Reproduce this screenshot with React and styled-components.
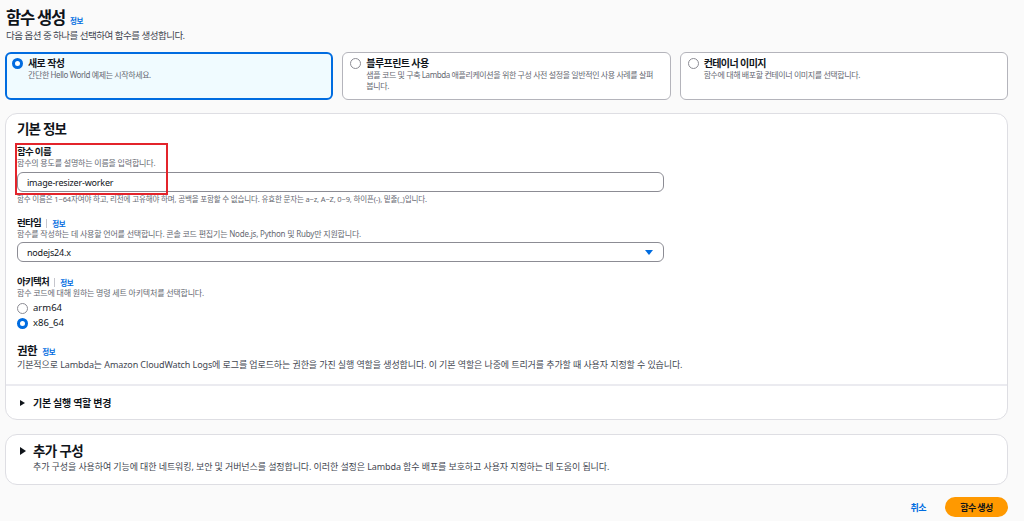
import React from "react";
import styled, { createGlobalStyle } from "styled-components";

const Global = createGlobalStyle`
  html, body { margin: 0; padding: 0; background: #fafafa; }
  body { font-family: "Noto Sans", "Noto Sans CJK KR", sans-serif; color: #0f141a; }
  * { box-sizing: border-box; }
`;

const Page = styled.div`
  width: 1024px;
  height: 521px;
  padding: 5px 16px 0 5px;
  overflow: hidden;
  background: #fafafa;
`;

const TitleRow = styled.div`
  display: flex;
  align-items: baseline;
  gap: 5px;
  padding-left: 1px;
`;

const Title = styled.h1`
  margin: 0;
  font-size: 16.5px;
  line-height: 26px;
  letter-spacing: -1.2px;
  font-weight: 700;
`;

const Info = styled.a`
  color: #006ce0;
  font-size: 7.5px;
  letter-spacing: -0.3px;
  font-weight: 700;
  text-decoration: none;
`;

const Subtitle = styled.div`
  font-size: 9.5px;
  line-height: 12px;
  letter-spacing: -0.5px;
  color: #424650;
  padding-left: 1px;
  margin-top: -1px;
`;

const Cards = styled.div`
  display: grid;
  grid-template-columns: repeat(3, 1fr);
  gap: 9px;
  margin-top: 10px;
`;

const Card = styled.div`
  height: 48px;
  border-radius: 6px;
  border: ${(p) => (p.$selected ? "2px solid #006ce0" : "1px solid #b4b4bb")};
  background: ${(p) => (p.$selected ? "#f0fbff" : "#ffffff")};
  padding: ${(p) => (p.$selected ? "3px 10px 0 5px" : "4px 11px 0 7px")};
  display: flex;
  gap: 5px;
`;

const Radio = styled.span`
  flex: none;
  width: 11px;
  height: 11px;
  border-radius: 50%;
  margin-top: ${(p) => p.$mt || 0}px;
  border: ${(p) => (p.$checked ? "3px solid #006ce0" : "1px solid #8c8c94")};
  background: #fff;
`;

const CardText = styled.div`
  display: flex;
  flex-direction: column;
`;

const CardTitle = styled.div`
  font-size: 10px;
  line-height: 12px;
  letter-spacing: -0.6px;
  font-weight: 600;
  color: #0f141a;
`;

const CardDesc = styled.div`
  font-size: 8px;
  line-height: 11px;
  letter-spacing: -0.4px;
  color: #656871;
`;

const Panel = styled.section`
  margin-top: ${(p) => p.$mt}px;
  background: #fff;
  border: 1px solid #dedee3;
  border-radius: 12px;
  overflow: hidden;
`;

const PanelBody = styled.div`
  padding: 6px 12px 12px 11px;
`;

const PanelTitle = styled.h2`
  margin: 0;
  font-size: 13.5px;
  line-height: 18px;
  letter-spacing: -0.8px;
  font-weight: 700;
`;

const Field = styled.div`
  margin-top: ${(p) => p.$mt || 0}px;
  display: flex;
  flex-direction: column;
`;

const NameField = styled(Field)`
  position: relative;
`;

const Highlight = styled.div`
  position: absolute;
  left: -2px;
  top: -3px;
  width: 153px;
  height: 52px;
  border: 2px solid #e3242b;
  pointer-events: none;
`;

const LabelRow = styled.div`
  display: flex;
  align-items: center;
  gap: 5px;
`;

const Label = styled.div`
  font-size: 9.5px;
  line-height: 12px;
  letter-spacing: -0.7px;
  font-weight: 700;
`;

const Sep = styled.span`
  width: 1px;
  height: 9px;
  background: #c6c6cd;
`;

const Desc = styled.div`
  font-size: 8px;
  line-height: 10px;
  letter-spacing: -0.2px;
  color: #656871;
`;

const LongDesc = styled.div`
  font-size: 9px;
  line-height: 14px;
  letter-spacing: -0.1px;
  color: #424650;
`;

const Input = styled.div`
  margin-top: ${(p) => p.$mt || 0}px;
  width: 647px;
  height: 20px;
  border: 1px solid #8c8c94;
  border-radius: 6px;
  padding: 0 9px;
  display: flex;
  align-items: center;
  justify-content: space-between;
  font-size: 9px;
  letter-spacing: -0.2px;
  color: #0f141a;
`;

const Caret = styled.span`
  width: 0;
  height: 0;
  border-left: 4px solid transparent;
  border-right: 4px solid transparent;
  border-top: 5px solid #006ce0;
  margin-right: 1px;
`;

const Hint = styled.div`
  margin-top: 2px;
  font-size: 7.5px;
  line-height: 10px;
  letter-spacing: -0.15px;
  color: #656871;
`;

const RadioOption = styled.div`
  display: flex;
  align-items: center;
  gap: 5px;
  margin-top: ${(p) => p.$mt || 0}px;
  font-size: 9.5px;
  line-height: 12px;
`;

const SubHeadRow = styled.div`
  display: flex;
  align-items: baseline;
  gap: 5px;
  margin-top: 14px;
`;

const SubHead = styled.div`
  font-size: 11.5px;
  line-height: 15px;
  letter-spacing: -0.5px;
  font-weight: 700;
`;

const Divider = styled.div`
  height: 2px;
  background: #ebebf0;
`;

const Expander = styled.div`
  display: flex;
  align-items: ${(p) => p.$align || "center"};
  gap: ${(p) => p.$gap}px;
  padding: ${(p) => p.$pad};
`;

const Tri = styled.span`
  width: 0;
  height: 0;
  margin-top: ${(p) => p.$mt || 0}px;
  border-top: ${(p) => p.$s}px solid transparent;
  border-bottom: ${(p) => p.$s}px solid transparent;
  border-left: ${(p) => p.$w}px solid #0f141a;
  flex: none;
`;

const ExpTitle = styled.div`
  font-size: ${(p) => p.$size}px;
  line-height: ${(p) => p.$lh}px;
  letter-spacing: ${(p) => p.$ls}px;
  font-weight: 700;
`;

const Actions = styled.div`
  display: flex;
  justify-content: flex-end;
  align-items: center;
  gap: 19px;
  margin-top: 12px;
`;

const LinkButton = styled.button`
  border: none;
  background: none;
  color: #006ce0;
  font: inherit;
  font-size: 9px;
  letter-spacing: -0.5px;
  font-weight: 700;
  padding: 0;
`;

const Primary = styled.button`
  border: none;
  background: #ff9900;
  color: #0f141a;
  font: inherit;
  font-size: 9px;
  letter-spacing: -0.6px;
  font-weight: 700;
  height: 20px;
  width: 63px;
  border-radius: 10px;
  padding: 0;
`;

export default function App() {
  return (
    <Page>
      <Global />
      <TitleRow>
        <Title>함수 생성</Title>
        <Info>정보</Info>
      </TitleRow>
      <Subtitle>다음 옵션 중 하나를 선택하여 함수를 생성합니다.</Subtitle>
      <Cards>
        <Card $selected>
          <Radio $checked $mt={1} />
          <CardText>
            <CardTitle>새로 작성</CardTitle>
            <CardDesc>간단한 Hello World 예제는 시작하세요.</CardDesc>
          </CardText>
        </Card>
        <Card>
          <Radio $mt={1} />
          <CardText>
            <CardTitle>블루프린트 사용</CardTitle>
            <CardDesc>
              샘플 코드 및 구축 Lambda 애플리케이션을 위한 구성 사전 설정을 일반적인 사용 사례를 살펴
              봅니다.
            </CardDesc>
          </CardText>
        </Card>
        <Card>
          <Radio $mt={1} />
          <CardText>
            <CardTitle>컨테이너 이미지</CardTitle>
            <CardDesc>함수에 대해 배포할 컨테이너 이미지를 선택합니다.</CardDesc>
          </CardText>
        </Card>
      </Cards>

      <Panel $mt={13}>
        <PanelBody>
          <PanelTitle>기본 정보</PanelTitle>
          <NameField $mt={8}>
            <Highlight />
            <Label>함수 이름</Label>
            <Desc>함수의 용도를 설명하는 이름을 입력합니다.</Desc>
            <Input $mt={4}>image-resizer-worker</Input>
            <Hint>
              함수 이름은 1~64자여야 하고, 리전에 고유해야 하며, 공백을 포함할 수 없습니다. 유효한 문자는 a~z, A~Z, 0~9, 하이픈(-), 밑줄(_)입니다.
            </Hint>
          </NameField>
          <Field $mt={13}>
            <LabelRow>
              <Label>런타임</Label>
              <Sep />
              <Info>정보</Info>
            </LabelRow>
            <Desc>함수를 작성하는 데 사용할 언어를 선택합니다. 콘솔 코드 편집기는 Node.js, Python 및 Ruby만 지원합니다.</Desc>
            <Input $mt={3}>
              nodejs24.x
              <Caret />
            </Input>
          </Field>
          <Field $mt={14}>
            <LabelRow>
              <Label>아키텍처</Label>
              <Sep />
              <Info>정보</Info>
            </LabelRow>
            <Desc>함수 코드에 대해 원하는 명령 세트 아키텍처를 선택합니다.</Desc>
            <RadioOption $mt={4}>
              <Radio />
              arm64
            </RadioOption>
            <RadioOption $mt={3}>
              <Radio $checked />
              x86_64
            </RadioOption>
          </Field>
          <SubHeadRow>
            <SubHead>권한</SubHead>
            <Info>정보</Info>
          </SubHeadRow>
          <LongDesc>
            기본적으로 Lambda는 Amazon CloudWatch Logs에 로그를 업로드하는 권한을 가진 실행 역할을 생성합니다. 이 기본 역할은 나중에 트리거를 추가할 때 사용자 지정할 수 있습니다.
          </LongDesc>
        </PanelBody>
        <Divider />
        <Expander $gap={8} $pad="10px 12px 9px 14px">
          <Tri $s={3} $w={5} />
          <ExpTitle $size={10} $lh={14} $ls={-0.3}>기본 실행 역할 변경</ExpTitle>
        </Expander>
      </Panel>

      <Panel $mt={14}>
        <Expander $gap={7} $align="flex-start" $pad="7px 12px 10px 14px">
          <Tri $s={4} $w={6} $mt={5} />
          <CardText>
            <ExpTitle $size={13.5} $lh={18} $ls={-0.6}>추가 구성</ExpTitle>
            <LongDesc>
              추가 구성을 사용하여 기능에 대한 네트워킹, 보안 및 거버넌스를 설정합니다. 이러한 설정은 Lambda 함수 배포를 보호하고 사용자 지정하는 데 도움이 됩니다.
            </LongDesc>
          </CardText>
        </Expander>
      </Panel>

      <Actions>
        <LinkButton>취소</LinkButton>
        <Primary>함수 생성</Primary>
      </Actions>
    </Page>
  );
}
